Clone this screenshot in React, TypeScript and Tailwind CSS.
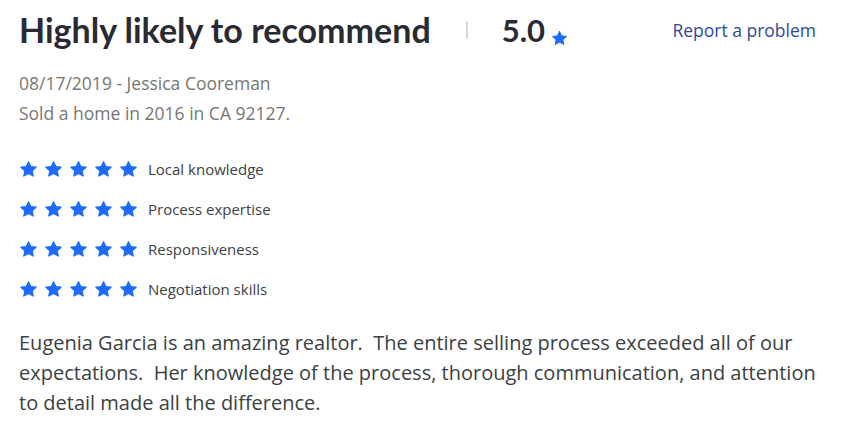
import React from "react";

const STAR_PATH =
  "M12 2.2l2.9 6.1 6.7.8-4.9 4.6 1.3 6.6L12 17l-6 3.3 1.3-6.6-4.9-4.6 6.7-.8z";

function Star({ className }: { className: string }) {
  return (
    <svg viewBox="0 0 24 24" className={className} fill="#1f6bff">
      <path d={STAR_PATH} strokeLinejoin="round" stroke="#1f6bff" strokeWidth="1.5" />
    </svg>
  );
}

const ratings = ["Local knowledge", "Process expertise", "Responsiveness", "Negotiation skills"];

export default function App() {
  return (
    <div className="w-[866px] h-[431px] bg-white px-[19px] pt-[10px] font-['Open_Sans',sans-serif]">
      <div className="flex items-center h-[40px]">
        <h1 className="font-['Lato',sans-serif] font-bold text-[34px] text-[#2a2a33] leading-none">
          Highly likely to recommend
        </h1>
        <div className="ml-[35px] w-[2px] h-[18px] bg-[#d9d9d9]" />
        <div className="ml-[34px] flex items-end">
          <span className="font-['Lato',sans-serif] font-bold text-[31px] text-[#2a2a33] leading-none">5.0</span>
          <Star className="ml-[6px] mb-[-1px] w-[17px] h-[17px]" />
        </div>
        <a className="ml-auto mr-[31px] text-[17.5px] text-[#2e4a9a]">Report a problem</a>
      </div>

      <div className="mt-[18px] text-[17.5px] leading-[30px] text-[#767676]">
        <p>08/17/2019 - Jessica Cooreman</p>
        <p>Sold a home in 2016 in CA 92127.</p>
      </div>

      <div className="mt-[30px] flex flex-col gap-[18px]">
        {ratings.map((r) => (
          <div key={r} className="flex items-center h-[22px]">
            <div className="flex gap-[6px]">
              {[0, 1, 2, 3, 4].map((i) => (
                <Star key={i} className="w-[19px] h-[19px]" />
              ))}
            </div>
            <span className="ml-[10px] text-[15px] text-[#3b4144]">{r}</span>
          </div>
        ))}
      </div>

      <p className="mt-[28px] w-[800px] text-[20px] leading-[30px] text-[#3b4144] whitespace-pre-wrap">
        {"Eugenia Garcia is an amazing realtor.  The entire selling process exceeded all of our expectations.  Her knowledge of the process, thorough communication, and attention to detail made all the difference."}
      </p>
    </div>
  );
}
